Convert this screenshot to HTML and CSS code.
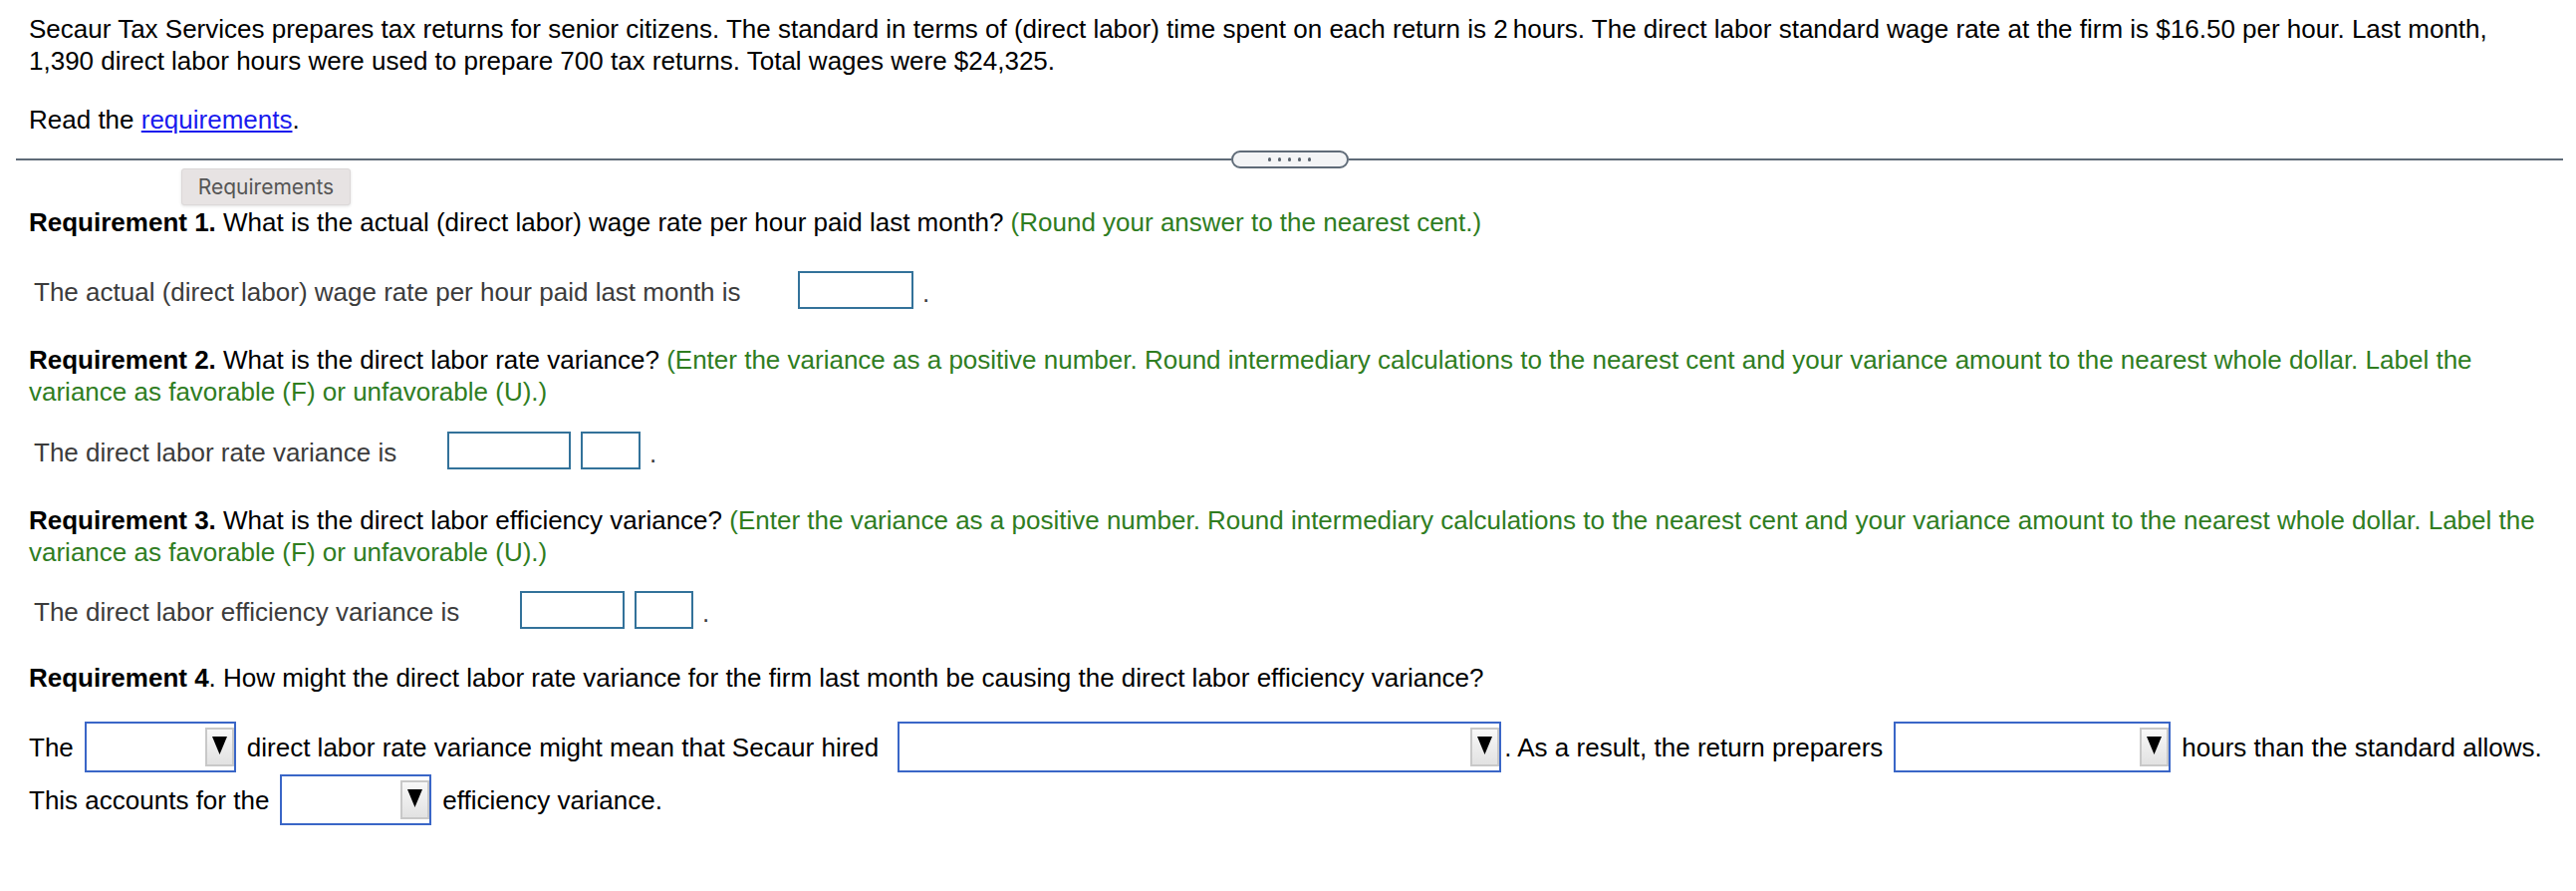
FILE: index.html
```html
<!DOCTYPE html>
<html lang="en">
<head>
<meta charset="utf-8">
<title>Secaur Tax Services</title>
<link rel="stylesheet" href="styles.css">
</head>
<body>
<div class="page">
  <p class="intro">Secaur Tax Services prepares tax returns for senior citizens. The standard in terms of (direct labor) time spent on each return is 2&#8201;hours. The direct labor standard wage rate at the firm is $16.50 per hour. Last month, 1,390 direct labor hours were used to prepare 700 tax returns. Total wages were $24,325.</p>
  <p class="read">Read the <a class="link" href="#">requirements</a>.</p>

  <div class="divider">
    <span class="rule"></span>
    <span class="pill"><i></i><i></i><i></i><i></i><i></i></span>
    <span class="rule"></span>
  </div>

  <div class="tab">Requirements</div>

  <p class="req req1"><b>Requirement 1.</b> What is the actual (direct labor) wage rate per hour paid last month? <span class="hint">(Round your answer to the nearest cent.)</span></p>
  <div class="answer row1">
    <span class="label label1">The actual (direct labor) wage rate per hour paid last month is</span>
    <span class="box box-116"></span>
    <span class="dot">.</span>
  </div>

  <p class="req req2"><b>Requirement 2.</b> What is the direct labor rate variance? <span class="hint">(Enter the variance as a positive number. Round intermediary calculations to the nearest cent and your variance amount to the nearest whole dollar. Label the variance as favorable (F) or unfavorable (U).)</span></p>
  <div class="answer row2">
    <span class="label label2">The direct labor rate variance is</span>
    <span class="box box-124"></span>
    <span class="box box-60"></span>
    <span class="dot">.</span>
  </div>

  <p class="req req3"><b>Requirement 3.</b> What is the direct labor efficiency variance? <span class="hint">(Enter the variance as a positive number. Round intermediary calculations to the nearest cent and your variance amount to the nearest whole dollar. Label the variance as favorable (F) or unfavorable (U).)</span></p>
  <div class="answer row3">
    <span class="label label3">The direct labor efficiency variance is</span>
    <span class="box box-105"></span>
    <span class="box box-59"></span>
    <span class="dot">.</span>
  </div>

  <p class="req req4"><b>Requirement 4</b>. How might the direct labor rate variance for the firm last month be causing the direct labor efficiency variance?</p>
  <div class="sentence first">
    <span class="txt">The</span>
    <span class="sel sel-152"><span class="sel-btn"><svg width="15" height="18" viewBox="0 0 15 18"><polygon points="0,0 15,0 7.5,18" fill="#000"/></svg></span></span>
    <span class="txt">direct labor rate variance might mean that Secaur hired</span>
    <span class="sel sel-606 sel-hired"><span class="sel-btn"><svg width="15" height="18" viewBox="0 0 15 18"><polygon points="0,0 15,0 7.5,18" fill="#000"/></svg></span></span>
    <span class="txt">. As a result, the return preparers</span>
    <span class="sel sel-278"><span class="sel-btn"><svg width="15" height="18" viewBox="0 0 15 18"><polygon points="0,0 15,0 7.5,18" fill="#000"/></svg></span></span>
    <span class="txt">hours than the standard allows.</span>
  </div>
  <div class="sentence second">
    <span class="txt">This accounts for the</span>
    <span class="sel sel-152"><span class="sel-btn"><svg width="15" height="18" viewBox="0 0 15 18"><polygon points="0,0 15,0 7.5,18" fill="#000"/></svg></span></span>
    <span class="txt">efficiency variance.</span>
  </div>
</div>
</body>
</html>
```
FILE: styles.css
```css
html, body {
  margin: 0;
  background: #ffffff;
}

body {
  font-family: "Liberation Sans", Arial, Helvetica, sans-serif;
  font-size: 26px;
  line-height: 32px;
  color: #000000;
}

.page {
  padding: 13px 31px 0 29px;
}

p {
  margin: 0;
}

.read {
  margin-top: 27px;
}

.link {
  color: #1a1aee;
  text-decoration: underline;
}

/* divider with grip */
.divider {
  display: flex;
  align-items: center;
  height: 18px;
  margin: 15px -18px 0 -13px;
}

.rule {
  flex: 1;
  height: 2px;
  background: #5f6b78;
}

.pill {
  box-sizing: border-box;
  width: 118px;
  height: 18px;
  border: 2px solid #5f6b78;
  border-radius: 9px;
  background: #f3f4f6;
  display: flex;
  align-items: center;
  justify-content: center;
  gap: 6.5px;
}

.pill i {
  display: block;
  width: 3.5px;
  height: 3.5px;
  border-radius: 50%;
  background: #59636e;
}

/* requirements tab */
.tab {
  box-sizing: border-box;
  width: 170px;
  height: 37px;
  margin-left: 153px;
  display: flex;
  align-items: center;
  justify-content: center;
  background: #e7e3e3;
  border: 1px solid #dcd8d8;
  border-radius: 3px;
  box-shadow: 0 1px 3px rgba(0, 0, 0, 0.12);
  font-family: Inter, "Open Sans", sans-serif;
  font-size: 21px;
  color: #555555;
  line-height: 1;
}

.req b {
  font-weight: bold;
}

.hint {
  color: #2f7d1f;
}

.req1 { margin-top: 1px; }
.req2 { margin-top: 35px; }
.req3 { margin-top: 35px; }
.req4 { margin-top: 33px; }

/* answer rows */
.answer {
  display: flex;
  align-items: center;
  padding-left: 5px;
  color: #3c3c3c;
}

.row1 { margin-top: 33px; }
.row2 { margin-top: 24px; }
.row3 { margin-top: 23px; }

.label {
  flex-shrink: 0;
  white-space: nowrap;
  padding-top: 4px;
}

.label1 { width: 767px; }
.label2 { width: 415px; }
.label3 { width: 488px; }

.box {
  box-sizing: border-box;
  height: 38px;
  border: 2px solid #33729a;
  background: #ffffff;
  flex-shrink: 0;
}

.box + .box {
  margin-left: 10px;
}

.box-116 { width: 116px; }
.box-124 { width: 124px; }
.box-60 { width: 60px; }
.box-105 { width: 105px; }
.box-59 { width: 59px; }

.dot {
  margin-left: 9px;
  align-self: flex-end;
  line-height: 32px;
}

/* requirement 4 sentence */
.sentence {
  display: flex;
  align-items: center;
  height: 51px;
  white-space: nowrap;
}

.sentence.first { margin-top: 28px; }
.sentence.second { margin-top: 2px; }

.txt {
  flex-shrink: 0;
}

.sel {
  box-sizing: border-box;
  height: 51px;
  flex-shrink: 0;
  display: flex;
  align-items: center;
  justify-content: flex-end;
  border: 2px solid #3a66c7;
  background: #ffffff;
  margin: 0 11px;
}

.sel-152 { width: 152px; }
.sel-606 { width: 606px; }
.sel-278 { width: 278px; }

.sel-hired {
  margin-left: 19px;
  margin-right: 3px;
}

.sel-btn {
  box-sizing: border-box;
  width: 29px;
  height: 39px;
  display: flex;
  align-items: center;
  justify-content: center;
  border: 2px solid #c8c8c8;
  background: linear-gradient(#f8f8f8, #e2e2e2);
  padding-bottom: 4px;
}
```
